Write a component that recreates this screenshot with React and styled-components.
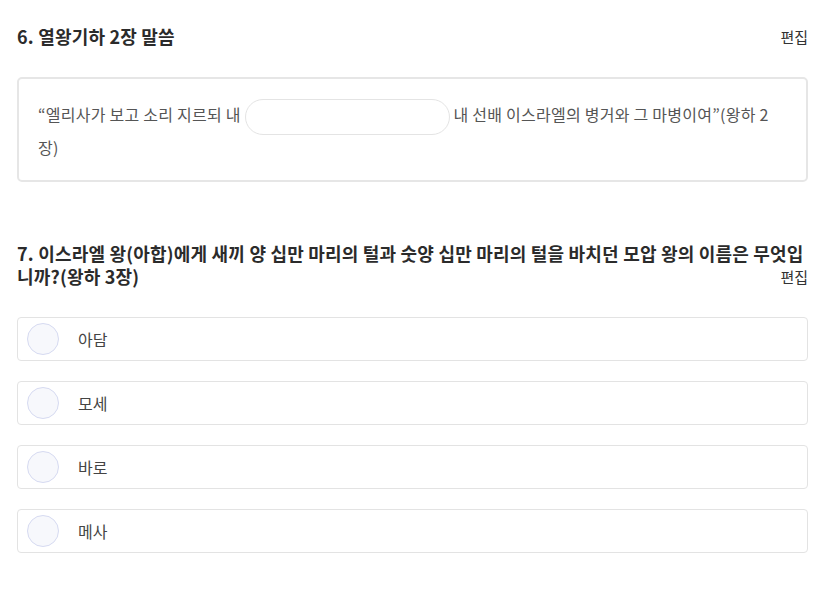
import React from 'react'
import styled, { createGlobalStyle } from 'styled-components'

const GlobalStyle = createGlobalStyle`
  body {
    margin: 0;
    background: #fff;
    font-family: 'Noto Sans CJK KR', 'Noto Sans', sans-serif;
    color: #333;
  }
`

const options = ['아담', '모세', '바로', '메사']

const App = () => {
  return (
    <Page>
      <GlobalStyle />
      <Section>
        <Header>
          <Title>6. 열왕기하 2장 말씀</Title>
          <EditLink>편집</EditLink>
        </Header>
        <BlankBox>
          “엘리사가 보고 소리 지르되 내 <BlankInput type='text' /> 내 선배 이스라엘의 병거와 그 마병이여”(왕하 2장)
        </BlankBox>
      </Section>
      <Section>
        <Header>
          <Title>
            7. 이스라엘 왕(아합)에게 새끼 양 십만 마리의 털과 숫양 십만 마리의 털을 바치던 모압 왕의 이름은 무엇입니까?(왕하 3장)
          </Title>
          <EditLink>편집</EditLink>
        </Header>
        <OptionList>
          {options.map((opt) => (
            <Option key={opt}>
              <Radio />
              <OptionText>{opt}</OptionText>
            </Option>
          ))}
        </OptionList>
      </Section>
    </Page>
  )
}

const Page = styled.div`
  padding: 25px 32px 40px 17px;
  display: flex;
  flex-direction: column;
  gap: 60px;
`

const Section = styled.section`
  display: flex;
  flex-direction: column;
  gap: 29px;
`

const Header = styled.div`
  font-size: 18px;
  line-height: 23px;
  &::after {
    content: '';
    display: block;
    clear: both;
  }
`

const Title = styled.span`
  font-weight: 700;
  letter-spacing: 0.2px;
  color: #2b2b2b;
`

const EditLink = styled.span`
  float: right;
  font-size: 15px;
  color: #333;
  cursor: pointer;
`

const BlankBox = styled.div`
  border: 2px solid #e6e6e6;
  border-radius: 5px;
  padding: 20px 19px 21px;
  font-size: 16px;
  line-height: 24px;
  letter-spacing: 0.25px;
  color: #555;
`

const BlankInput = styled.input`
  display: inline-block;
  vertical-align: middle;
  width: 205px;
  height: 36px;
  box-sizing: border-box;
  border: 1px solid #e4e4e4;
  border-radius: 18px;
  margin: 0;
  padding: 0 14px;
  outline: none;
  font-family: inherit;
  font-size: 16px;
`

const OptionList = styled.div`
  display: flex;
  flex-direction: column;
  gap: 20px;
`

const Option = styled.div`
  display: flex;
  align-items: center;
  height: 44px;
  box-sizing: border-box;
  border: 1px solid #e3e3e3;
  border-radius: 4px;
  padding: 0 9px;
  cursor: pointer;
`

const Radio = styled.span`
  width: 32px;
  height: 32px;
  box-sizing: border-box;
  border-radius: 50%;
  border: 1px solid #d6daf1;
  background: #f7f8fc;
  flex-shrink: 0;
`

const OptionText = styled.span`
  margin-left: 19px;
  font-size: 16px;
  color: #444;
`

export default App
